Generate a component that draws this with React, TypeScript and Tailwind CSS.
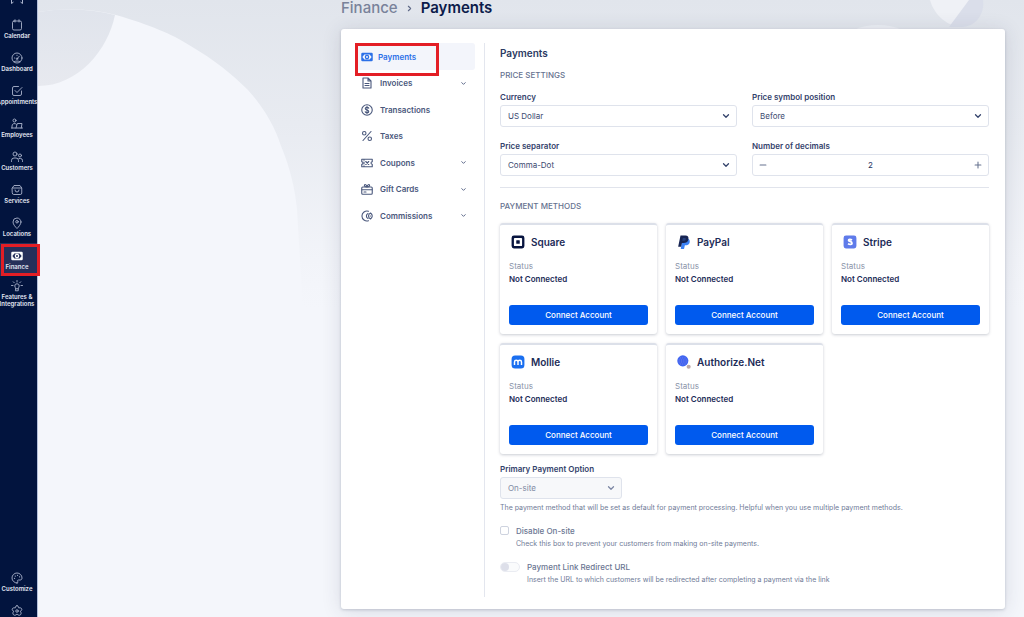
import { useState } from 'react';
import type { ReactNode } from 'react';
import { ChevronDown, ChevronRight, Minus, Plus } from 'lucide-react';

interface IconProps {
  children: ReactNode;
  className?: string;
  strokeWidth?: number;
}

function Icon({ children, className = 'size-3', strokeWidth = 1.8 }: IconProps) {
  return (
    <svg
      viewBox="0 0 24 24"
      fill="none"
      stroke="currentColor"
      strokeWidth={strokeWidth}
      strokeLinecap="round"
      strokeLinejoin="round"
      className={`shrink-0 ${className}`}
      aria-hidden="true"
    >
      {children}
    </svg>
  );
}

// Solid banknote, used by the sidebar and the settings menu
const banknote = (
  <path
    fill="currentColor"
    stroke="none"
    fillRule="evenodd"
    d="M3 3.500h18a2.500 2.500 0 0 1 2.500 2.500v12a2.500 2.500 0 0 1-2.500 2.500H3A2.500 2.500 0 0 1 .5 18V6A2.500 2.500 0 0 1 3 3.500ZM6.500 7A4 4 0 0 1 3.500 10v4a4 4 0 0 1 3 3h11a4 4 0 0 1 3-3v-4a4 4 0 0 1-3-3ZM12 7.500a4.500 4.500 0 1 0 0 9 4.500 4.500 0 0 0 0-9Zm0 2.500a2 2 0 1 1 0 4 2 2 0 0 1 0-4Z"
  />
);

const sidebarItems = [
  {
    name: 'Calendar',
    icon: (
      <>
        <rect x="3" y="4" width="18" height="18" rx="3" />
        <path d="M8 1.500V6M16 1.500V6" />
      </>
    ),
  },
  {
    name: 'Dashboard',
    icon: (
      <>
        <circle cx="12" cy="12" r="10" />
        <circle cx="12" cy="13.500" r="1.500" />
        <path d="m13 12.500 3.500-4M7 12h.5M12 6.500V7M6 19.500c3.500-2 8.500-2 12 0" />
      </>
    ),
  },
  {
    name: 'Appointments',
    icon: (
      <>
        <path d="M21 12v6a3 3 0 0 1-3 3H6a3 3 0 0 1-3-3V6a3 3 0 0 1 3-3h9" />
        <path d="m8 11 4 4L22 5" />
      </>
    ),
  },
  {
    name: 'Employees',
    icon: (
      <>
        <circle cx="7" cy="5" r="3" />
        <path d="M1 20h22M2 20v-4a5 5 0 0 1 9-3M10 20l2.500-9H22l-1.500 9" />
      </>
    ),
  },
  {
    name: 'Customers',
    icon: (
      <>
        <circle cx="8" cy="6" r="4" />
        <circle cx="18" cy="9" r="3" />
        <path d="M1 21v-2a5 5 0 0 1 5-5h4a5 5 0 0 1 5 5v2M16 15h3a4 4 0 0 1 4 4v2" />
      </>
    ),
  },
  {
    name: 'Services',
    icon: (
      <>
        <path d="M2.500 8 6 3h12l3.500 5v10a3 3 0 0 1-3 3h-13a3 3 0 0 1-3-3ZM3 8h18" />
        <path d="M8 12a4 4 0 0 0 8 0" />
      </>
    ),
  },
  {
    name: 'Locations',
    icon: (
      <>
        <path d="M20 10c0 5-5.500 10.500-8 13-2.500-2.500-8-8-8-13a8 8 0 0 1 16 0Z" />
        <circle cx="12" cy="9.500" r="2.500" />
      </>
    ),
  },
  { name: 'Finance', icon: banknote },
  {
    name: 'Features & Integrations',
    icon: (
      <>
        <path d="M9.500 17c0-2-2-2.500-2-5a4.500 4.500 0 0 1 9 0c0 2.500-2 3-2 5v4.500h-5ZM9.500 17.500h5" />
        <path d="M12 1v3M1 11h3M20 11h3M4.500 3.500 6.500 5.500M19.500 3.500l-2 2" />
      </>
    ),
  },
];

const customizeIcon = (
  <>
    <path d="M12 22a10 10 0 1 1 10-10c0 3-2 4-4 4h-3c-2 0-2.500 1.500-1.500 3s0 3-1.500 3Z" />
    <path d="M7 12.500h.1M8.500 8h.1M13 6.500h.1M17 9.500h.1" strokeWidth="2.500" />
  </>
);

const settingsIcon = (
  <>
    <path d="M12 1.500c2.500 0 3.500 2 3.500 4.500 3-1 5.500 0 6 2s-.5 3.500-3 4.500c2 2.500 2.500 5 .5 7s-4.500 1-7-1.500c-2.500 2.500-5 3.500-7 1.500s-1.500-4.500.5-7c-2.500-1-3.500-2.500-3-4.500s3-3 6-2c0-2.500 1-4.500 3.500-4.500Z" />
    <circle cx="12" cy="12" r="2.500" />
  </>
);

const menuItems = [
  {
    name: 'Invoices',
    expandable: true,
    icon: (
      <>
        <path d="M4 2h10l6 6v14H4ZM14 2v6h6M8 13h8M8 17h8" />
      </>
    ),
  },
  {
    name: 'Transactions',
    expandable: false,
    icon: (
      <>
        <circle cx="12" cy="12" r="10.500" />
        <path d="M15.500 8.500c-.5-1.500-2-2-3.500-2-2 0-3.500 1-3.500 2.700C8.500 13 15.500 11 15.500 15c0 1.700-1.500 2.600-3.500 2.600-1.700 0-3.200-.7-3.600-2.200M12 4.500v15" />
      </>
    ),
  },
  {
    name: 'Taxes',
    expandable: false,
    icon: (
      <>
        <path d="M20 3 4 21" />
        <circle cx="6.500" cy="6.500" r="3.500" />
        <circle cx="17.500" cy="17.500" r="3.500" />
      </>
    ),
  },
  {
    name: 'Coupons',
    expandable: true,
    icon: (
      <>
        <path d="M1.500 4.500h21v5a2.500 2.500 0 0 0 0 5v5h-21v-5a2.500 2.500 0 0 0 0-5Z" />
        <path d="m9.500 9 6 6M15.500 9l-6 6M6 5v1.500M6 10v4M6 17.500V19" />
      </>
    ),
  },
  {
    name: 'Gift Cards',
    expandable: true,
    icon: (
      <>
        <rect x="1.500" y="8" width="21" height="14.500" rx="2" />
        <path d="M2 13.500h20M6 18h4M12 8C8 8 6 6 7 4s5 0 5 4c0-4 4-6 5-4s-1 4-5 4Z" />
      </>
    ),
  },
  {
    name: 'Commissions',
    expandable: true,
    icon: (
      <>
        <path d="M15 2.500a10 10 0 1 0 0 19M14 7a5.500 5.500 0 0 0 0 10" />
        <path d="M15 12c0-3 2-5 4-6 2 1.500 3.500 3.500 3.500 6s-1.500 4.500-3.500 6c-2-1-4-3-4-6ZM18.500 12h.5" />
      </>
    ),
  },
];

const methods = [
  {
    name: 'Square',
    logo: (
      <>
        <rect x="1" y="1" width="22" height="22" rx="4" fill="#07143f" />
        <rect x="5" y="5" width="14" height="14" rx="1.500" fill="#fff" />
        <rect x="9" y="9" width="6" height="6" rx="1" fill="#07143f" />
      </>
    ),
  },
  {
    name: 'PayPal',
    logo: (
      <>
        <path d="M9 6h9c4 1 4.500 4 3.500 7.500-1 3-3.500 4-7 4h-1L12 24H6.500Z" fill="#3b82f6" />
        <path d="M6 1h8.500c4 0 6 2.500 5 6.500-1 4.500-4 6-8 6H8.500L7 20H2Z" fill="#172554" />
        <path d="M10 5h3c2 0 2.500 1 2 2.500S13.500 10 11.500 10H9Z" fill="#27417f" />
      </>
    ),
  },
  {
    name: 'Stripe',
    logo: (
      <>
        <rect x="1" y="1" width="22" height="22" rx="4" fill="#5f7bea" />
        <path
          d="M15.500 8.500C13 7 9.500 7 9.500 9c0 2.500 6 1.500 6 5 0 2.500-4 2.500-7 1"
          fill="none"
          stroke="#fff"
          strokeWidth="3"
        />
      </>
    ),
  },
  {
    name: 'Mollie',
    logo: (
      <>
        <rect x="1" y="1" width="22" height="22" rx="6" fill="#1a6ff0" />
        <path
          d="M6 17v-5a3 3 0 0 1 6 0v5M12 12a3 3 0 0 1 6 0v5"
          fill="none"
          stroke="#fff"
          strokeWidth="2.500"
        />
      </>
    ),
  },
  {
    name: 'Authorize.Net',
    logo: (
      <>
        <circle cx="10" cy="10" r="9.500" fill="#3f66f2" />
        <path
          d="M5 5h10M3 8.500h14M3 12h14M5 15.500h10"
          stroke="#8a7fe0"
          strokeWidth="1.500"
          strokeDasharray="1.500 2.500"
        />
        <circle cx="20" cy="20" r="3.500" fill="#bba8a8" />
      </>
    ),
  },
];

interface SidebarItemProps {
  name: string;
  icon: ReactNode;
  iconOnly?: boolean;
}

function SidebarItem({ name, icon, iconOnly = false }: SidebarItemProps) {
  const active = name === 'Finance';
  return (
    <a
      href="#"
      aria-label={name}
      className={`relative flex min-h-[33px] flex-col items-center pr-[3px] ${
        name.includes('&') ? 'pt-[4px]' : 'pt-[7px]'
      } ${active ? 'bg-[#26305a] text-white' : 'text-[#aab3cc]'}`}
    >
      <Icon>{icon}</Icon>
      {!iconOnly && (
        <span className="flex w-12 justify-center pt-px text-center text-[6px] leading-[7px] font-semibold text-[#e3e7f2]">
          {name}
        </span>
      )}
      {active && <span className="absolute top-px -right-[3px] bottom-0 left-px border-3 border-[#e31e25]" />}
    </a>
  );
}

interface SelectFieldProps {
  id: string;
  label: string;
  options: string[];
  disabled?: boolean;
}

function SelectField({ id, label, options, disabled = false }: SelectFieldProps) {
  return (
    <div className="flex flex-col gap-[2px]">
      <label htmlFor={id} className="text-[8px] leading-3 font-semibold text-[#33426b]">
        {label}
      </label>
      <div className="relative">
        <select
          id={id}
          disabled={disabled}
          className="block h-[22px] w-full appearance-none rounded-[3px] border border-[#dfe3ec] bg-white px-[7px] text-[8px] text-[#3c4a70] disabled:bg-[#f7f8fa] disabled:text-[#808aa3] disabled:opacity-100"
        >
          {options.map(option => (
            <option key={option}>{option}</option>
          ))}
        </select>
        <ChevronDown
          className={`pointer-events-none absolute top-[6px] right-[6px] size-[10px] ${
            disabled ? 'text-[#7b86a3]' : 'text-[#33426b]'
          }`}
          strokeWidth={3}
        />
      </div>
    </div>
  );
}

export default function App() {
  const [decimals, setDecimals] = useState(2);

  return (
    <div className="relative isolate flex min-h-screen bg-[#f4f6fb] font-['Inter',sans-serif]">
      {/* Background shapes */}
      <svg
        className="absolute inset-0 -z-10 h-full w-full"
        viewBox="0 0 1024 617"
        preserveAspectRatio="none"
        aria-hidden="true"
      >
        <defs>
          <linearGradient id="backdrop" x1="0" y1="0" x2="0" y2="1">
            <stop offset="0" stopColor="#e1e5ec" />
            <stop offset="0.200" stopColor="#e8ebf1" />
            <stop offset="0.420" stopColor="#f2f4f9" />
            <stop offset="0.500" stopColor="#f4f6fb" />
          </linearGradient>
          <linearGradient id="arc" x1="0" y1="0" x2="0" y2="1">
            <stop offset="0" stopColor="#e0e4ec" />
            <stop offset="1" stopColor="#e7e9ef" />
          </linearGradient>
        </defs>
        <rect width="1024" height="617" fill="url(#backdrop)" />
        <path d="M38 12Q80 6 116 15C150 25 172 34 189 45C215 60 233 75 248 90C264 108 275 127 281 146C291 170 295 190 297 209L303 310H38Z" fill="#f4f6fb" />
        <path d="M38 12Q78 6 115 15C108 50 78 86 38 86Z" fill="url(#arc)" />
        <path d="M930 0h52c2 12-6 26-20 27-14 0-28-12-32-27Z" fill="#eff1f6" />
        <path d="M969 0h14c2 12-6 26-20 27h-14Z" fill="#dadeea" />
        <ellipse cx="878" cy="42" rx="34" ry="17" fill="#eceff4" />
      </svg>

      <aside className="sticky top-0 flex h-screen w-[37px] shrink-0 flex-col bg-[#02143e] outline outline-[#b4c0db]">
        <div className="flex h-3 items-start justify-center pr-[3px] text-[#aab3cc]">
          <svg viewBox="0 0 14 4" className="h-1 w-[14px]" fill="none" stroke="currentColor" aria-hidden="true">
            <path d="M1.500 0v3.500l2-1.500M12.500 0v3.500l-2-1.500" />
          </svg>
        </div>
        <nav>
          {sidebarItems.map(item => (
            <SidebarItem key={item.name} name={item.name} icon={item.icon} />
          ))}
        </nav>
        <nav className="mt-auto h-[52px] shrink-0 overflow-hidden">
          <SidebarItem name="Customize" icon={customizeIcon} />
          <SidebarItem name="Settings" icon={settingsIcon} iconOnly />
        </nav>
      </aside>

      <main className="flex min-w-0 flex-1 flex-col pr-[19px] pb-2 pl-[304px]">
        <h1 className="flex h-[29px] items-start gap-[7px] text-[15px] leading-4 font-semibold text-[#0c1b4a]">
          <span className="font-medium text-[#79829a]">Finance</span>
          <ChevronRight className="mt-1 size-[9px] text-[#5e6987]" strokeWidth={3} />
          <span>Payments</span>
        </h1>

        <div className="flex flex-1 rounded-[3px] bg-white pt-[14px] pr-4 pb-3 pl-[14px] shadow-[0_1px_3px_rgba(40,50,80,0.2),0_2px_20px_rgba(40,50,80,0.14)]">
          {/* Settings menu */}
          <nav className="w-[120px] shrink-0 text-[8px] font-semibold text-[#4a587c]">
            <a
              href="#"
              className="relative flex h-[27px] items-center gap-[5px] rounded-[3px] bg-[#f3f5fb] pl-[6px] text-[#2b70e8]"
            >
              <Icon>{banknote}</Icon>
              Payments
              <span className="absolute top-0 -bottom-[6px] left-0 w-[84px] border-3 border-[#e31e25]" />
            </a>
            <ul className="grid h-[159px] grid-rows-6">
              {menuItems.map(item => (
                <li key={item.name} className="flex">
                  <a href="#" className="flex flex-1 items-center gap-[7px] pr-2 pl-[6px]">
                    <Icon strokeWidth={2.2}>{item.icon}</Icon>
                    <span className="flex-1">{item.name}</span>
                    {item.expandable && <ChevronDown className="size-[7px]" strokeWidth={3} />}
                  </a>
                </li>
              ))}
            </ul>
          </nav>

          <section className="ml-[9px] min-w-0 flex-1 border-l border-[#e3e6ee] pl-[15px]">
            <h2 className="text-[10px] leading-5 font-semibold text-[#2b3a63]">Payments</h2>
            <h3 className="mt-[6px] text-[8px] leading-3 font-medium text-[#66728f]">PRICE SETTINGS</h3>

            <div className="mt-[10px] grid grid-cols-2 gap-x-[15px] gap-y-[13px]">
              <SelectField id="currency" label="Currency" options={['US Dollar', 'Euro', 'British Pound']} />
              <SelectField id="symbol" label="Price symbol position" options={['Before', 'After']} />
              <SelectField id="separator" label="Price separator" options={['Comma-Dot', 'Dot-Comma']} />
              <div className="flex flex-col gap-[2px]">
                <label htmlFor="decimals" className="text-[8px] leading-3 font-semibold text-[#33426b]">
                  Number of decimals
                </label>
                <div className="flex h-[22px] items-center rounded-[3px] border border-[#dfe3ec] px-[5px] text-[#66728f]">
                  <button type="button" aria-label="Decrease" onClick={() => setDecimals(Math.max(0, decimals - 1))}>
                    <Minus className="size-[10px]" strokeWidth={2.5} />
                  </button>
                  <input
                    id="decimals"
                    value={decimals}
                    onChange={e => setDecimals(Number(e.target.value) || 0)}
                    className="h-5 min-w-0 flex-1 text-center text-[8px] text-[#24335f] outline-none"
                  />
                  <button type="button" aria-label="Increase" onClick={() => setDecimals(decimals + 1)}>
                    <Plus className="size-[10px]" strokeWidth={2.5} />
                  </button>
                </div>
              </div>
            </div>

            <hr className="mt-[11px] border-[#e1e4ec]" />

            <h3 className="mt-3 text-[8px] leading-3 font-medium text-[#66728f]">PAYMENT METHODS</h3>
            <div className="mt-[11px] grid grid-cols-3 gap-[9px]">
              {methods.map(method => (
                <article
                  key={method.name}
                  className="rounded-[3px] border-t-2 border-[#dce0e9] bg-white px-[9px] pt-[7px] pb-[9px] shadow-[0_1px_3px_rgba(40,50,80,0.25)]"
                >
                  <h4 className="flex h-5 items-center gap-[6px] pl-[2px] text-[10px] font-semibold text-[#1c2b57]">
                    <svg viewBox="0 0 24 24" className="size-[14px] shrink-0" aria-hidden="true">
                      {method.logo}
                    </svg>
                    {method.name}
                  </h4>
                  <p className="mt-2 text-[8px] leading-3 text-[#8a93a9]">Status</p>
                  <p className="mt-px text-[8px] leading-3 font-semibold text-[#1c2b57]">Not Connected</p>
                  <button
                    type="button"
                    className="mt-5 h-5 w-full rounded-[3px] bg-[#005aee] text-[8px] font-medium text-white"
                  >
                    Connect Account
                  </button>
                </article>
              ))}
            </div>

            <div className="mt-[9px] w-[122px]">
              <SelectField id="primary" label="Primary Payment Option" options={['On-site']} disabled />
            </div>
            <p className="mt-[3px] text-[7px] leading-3 text-[#6f7b98]">
              The payment method that will be set as default for payment processing. Helpful when you use multiple
              payment methods.
            </p>

            <div className="mt-[11px] flex gap-[7px]">
              <input
                id="disable"
                type="checkbox"
                className="mt-px size-[9px] shrink-0 appearance-none rounded-[2px] border border-[#ced3df] bg-white checked:bg-[#005aee]"
              />
              <div>
                <label htmlFor="disable" className="block text-[8px] leading-3 font-medium text-[#6b7692]">
                  Disable On-site
                </label>
                <p className="mt-px text-[7px] leading-3 text-[#6f7b98]">
                  Check this box to prevent your customers from making on-site payments.
                </p>
              </div>
            </div>

            <div className="mt-[11px] flex gap-[7px] pb-[11px]">
              <input
                id="redirect"
                type="checkbox"
                role="switch"
                className="mt-px flex h-[10px] w-5 shrink-0 appearance-none items-center rounded-full border border-[#eaecf2] bg-[#fafbfc] before:size-[8px] before:rounded-full before:bg-[#dddfe9] checked:justify-end"
              />
              <div>
                <label htmlFor="redirect" className="block text-[8px] leading-3 font-medium text-[#6b7692]">
                  Payment Link Redirect URL
                </label>
                <p className="mt-px text-[7px] leading-3 text-[#6f7b98]">
                  Insert the URL to which customers will be redirected after completing a payment via the link
                </p>
              </div>
            </div>
          </section>
        </div>
      </main>
    </div>
  );
}
